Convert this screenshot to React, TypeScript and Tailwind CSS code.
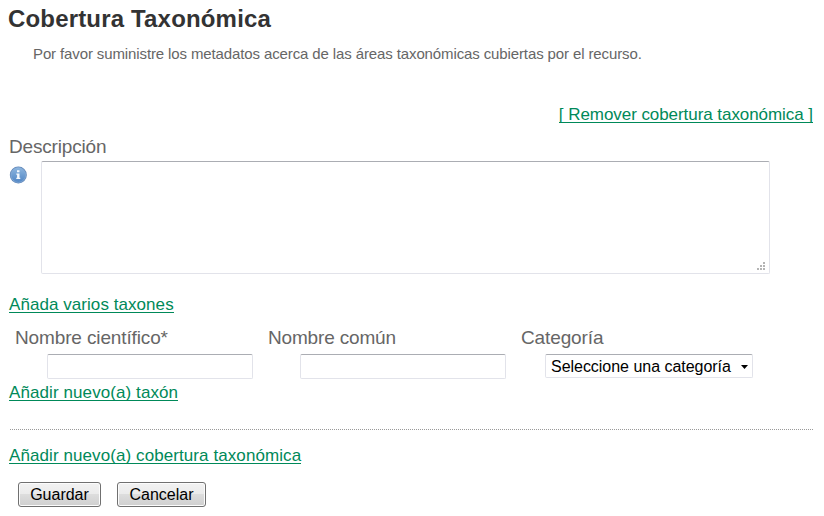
import React from "react";

const link =
  "w-fit whitespace-nowrap border-b border-[#008959] text-[17px] leading-[15px] text-[#008959]";
const label = "whitespace-nowrap text-[19px] leading-[22px] text-[#666]";
const field =
  "block rounded-[2px] border border-[#e2e3ea] border-t-[#abadb3] bg-white outline-none";
const button =
  "h-[25px] rounded-[3px] border border-[#707070] bg-[linear-gradient(#f2f2f2,#ebebeb_49%,#dddddd_50%,#cfcfcf)] text-[16px] leading-[22px] text-black shadow-[inset_0_0_0_1px_#fcfcfc]";

function InfoIcon() {
  return (
    <svg width="18" height="18" viewBox="0 0 18 18" className="block">
      <defs>
        <linearGradient id="info" x1="0" y1="0" x2="0" y2="1">
          <stop offset="0" stopColor="#8db6df" />
          <stop offset="1" stopColor="#5186c5" />
        </linearGradient>
      </defs>
      <circle cx="9.3" cy="9" r="8.5" fill="#5f86b8" />
      <circle cx="9.3" cy="9" r="7.4" fill="url(#info)" stroke="#89afd9" strokeWidth=".7" />
      <path d="M8 4.2h2.5v2H8zM7.3 7.4h3.2v4.4h.8v1.3h-4v-1.3h.8V8.7h-.8z" fill="#f5f9fd" />
    </svg>
  );
}

function Grip() {
  return (
    <svg width="8" height="8" viewBox="0 0 8 8" className="absolute right-[5px] bottom-[4px]" fill="#b4b4b4">
      <path d="M6 0h2v2H6zM3 3h2v2H3zM6 3h2v2H6zM0 6h2v2H0zM3 6h2v2H3zM6 6h2v2H6z" />
    </svg>
  );
}

export default function App() {
  return (
    <main className="flex h-[516px] w-[824px] flex-col bg-white pl-[9px] font-['Liberation_Sans',Arial,sans-serif]">
      <h1 className="mt-[5px] -ml-px text-[24px] leading-[28px] font-bold tracking-[0.17px] whitespace-nowrap text-[#333]">
        Cobertura Taxonómica
      </h1>
      <p className="mt-[12px] ml-[24px] text-[15px] leading-[18px] tracking-[-0.117px] whitespace-nowrap text-[#666]">
        Por favor suministre los metadatos acerca de las áreas taxonómicas cubiertas por el recurso.
      </p>
      <a className={`${link} mt-[44px] mr-[11px] self-end tracking-[-0.06px]`}>
        [ Remover cobertura taxonómica ]
      </a>
      <label className={`${label} mt-[13px] tracking-[-0.18px]`}>Descripción</label>
      <div className="mt-[3px] flex h-[113px]">
        <div className="mt-[5px] w-[32px]">
          <InfoIcon />
        </div>
        <div className="relative">
          <textarea className={`${field} h-[113px] w-[729px] resize-none`} />
          <Grip />
        </div>
      </div>
      <a className={`${link} mt-[23px] tracking-[0.06px]`}>Añada varios taxones</a>
      <div className="mt-[14px] ml-[6px] flex h-[53px]">
        <div className="w-[253px]">
          <label className={`${label} block tracking-[-0.13px]`}>Nombre científico*</label>
          <input className={`${field} mt-[5px] ml-[32px] h-[25px] w-[206px]`} />
        </div>
        <div className="w-[253px]">
          <label className={`${label} block tracking-[-0.17px]`}>Nombre común</label>
          <input className={`${field} mt-[5px] ml-[32px] h-[25px] w-[206px]`} />
        </div>
        <div>
          <label className={`${label} block tracking-[-0.12px]`}>Categoría</label>
          <div
            className={`${field} mt-[5px] ml-[24px] flex! h-[24px] w-[208px] items-center justify-between pr-[4px] pl-[5px] text-[16px] tracking-[-0.03px] whitespace-nowrap text-black`}
          >
            <span className="pt-[2px] leading-[20px]">Seleccione una categoría</span>
            <svg width="7" height="4" viewBox="0 0 7 4" className="mt-[2px]">
              <path d="M0 0h7L3.5 4z" />
            </svg>
          </div>
        </div>
      </div>
      <a className={`${link} mt-[5px] tracking-[0.09px]`}>Añadir nuevo(a) taxón</a>
      <hr className="mt-[28px] ml-px w-[803px] border-t border-dotted border-[#999]" />
      <a className={`${link} mt-[18px] tracking-[0.085px]`}>Añadir nuevo(a) cobertura taxonómica</a>
      <div className="mt-[18px] ml-[9px] flex gap-[16px]">
        <button className={`${button} w-[83px]`}>Guardar</button>
        <button className={`${button} w-[89px]`}>Cancelar</button>
      </div>
    </main>
  );
}
